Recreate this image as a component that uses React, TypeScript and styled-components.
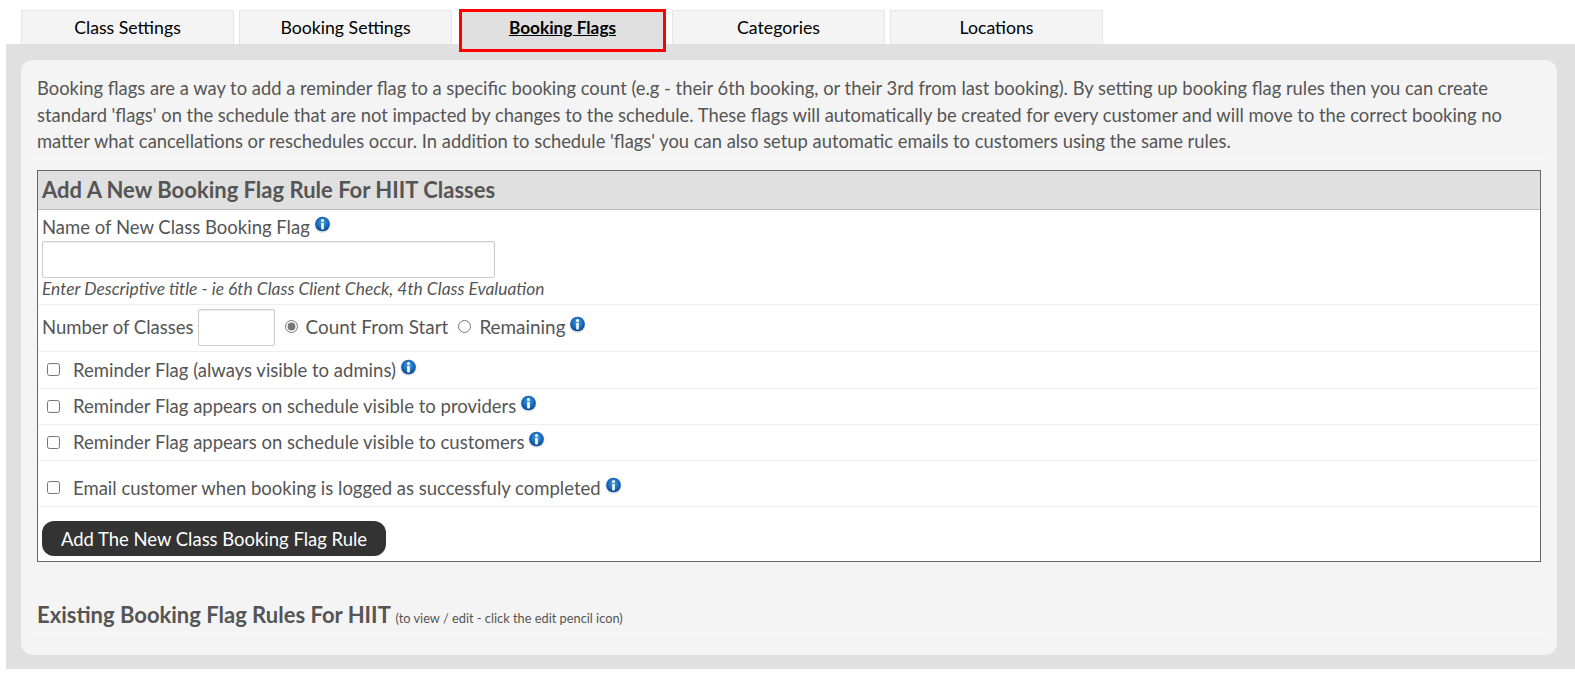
import React from 'react';
import styled, { createGlobalStyle } from 'styled-components';

const GlobalStyle = createGlobalStyle`
  html, body {
    margin: 0;
    padding: 0;
    background: #fff;
  }
  body {
    font-family: Lato, "Open Sans", sans-serif;
    font-size: 18.5px;
    color: #555;
  }
`;

const TabBar = styled.div`
  display: flex;
  align-items: flex-start;
  height: 34px;
  padding: 10px 0 0 21px;
`;

const Tab = styled.div<{ $active?: boolean; $gap?: number }>`
  position: relative;
  box-sizing: border-box;
  width: ${(p) => (p.$active ? '207px' : '213px')};
  height: ${(p) => (p.$active ? '43px' : '34px')};
  margin-top: ${(p) => (p.$active ? '-1px' : '0')};
  margin-right: ${(p) => p.$gap ?? 5}px;
  padding-top: ${(p) => (p.$active ? '5px' : '6px')};
  text-align: center;
  font-size: ${(p) => (p.$active ? '17.3px' : '17.7px')};
  line-height: 21px;
  color: #000;
  background: ${(p) => (p.$active ? '#e0e0e0' : '#f4f4f4')};
  border: ${(p) => (p.$active ? '3px solid #f00' : '1px solid #e6e6e6')};
  border-bottom: ${(p) => (p.$active ? '3px solid #f00' : 'none')};
  text-decoration: ${(p) => (p.$active ? 'underline' : 'none')};
  font-weight: ${(p) => (p.$active ? 700 : 400)};
`;

const Panel = styled.div`
  margin-left: 6px;
  padding: 16px 18px 14px 15px;
  background: #e0e0e0;
`;

const Card = styled.div`
  box-sizing: border-box;
  height: 595px;
  padding: 15px 11px 0;
  background: #f4f4f4;
  border-radius: 12px;
`;

const Intro = styled.p`
  margin: 0;
  padding: 0 5px 3px;
  font-size: 18.38px;
  line-height: 26.5px;
  border-bottom: 1px solid #fbfbfb;
`;

const RuleBox = styled.div`
  margin: 11px 5px 0 5px;
  background: #fff;
  border: 1px solid #666;
`;

const RuleTitle = styled.h2`
  margin: 0;
  height: 38px;
  padding-left: 4px;
  font-size: 22px;
  font-weight: 700;
  line-height: 37px;
  background: #e0e0e0;
  border-bottom: 1px solid #bbb;
`;

const NameRow = styled.div`
  box-sizing: border-box;
  height: 95px;
  padding: 4px 4px 0;
  border-bottom: 1px solid #eee;
`;

const Label = styled.div`
  display: flex;
  align-items: center;
  height: 27px;
  line-height: 27px;
`;

const TextInput = styled.input<{ $width: number; $height: number }>`
  display: block;
  box-sizing: border-box;
  width: ${(p) => p.$width}px;
  height: ${(p) => p.$height}px;
  margin: 0;
  background: #fff;
  border: 1px solid #ccc;
  border-radius: 2px;
  box-shadow: inset 0 1px 2px rgba(0, 0, 0, 0.07);
`;

const Hint = styled.div`
  font-size: 17.4px;
  font-style: italic;
  line-height: 22px;
`;

const CountRow = styled.div`
  display: flex;
  align-items: center;
  box-sizing: border-box;
  height: 47px;
  padding: 0 4px 2px;
  border-bottom: 1px solid #eee;
`;

const CountLabel = styled.span`
  margin-right: 4px;
`;

const NumberField = styled(TextInput)`
  margin-top: 2px;
`;

const Radio = styled.input`
  width: 13px;
  height: 13px;
  margin: 0 8px 0 10px;
  accent-color: #777;
`;

const RadioText = styled.span`
  font-size: 18.9px;
`;

const CheckRow = styled.label<{ $height: number; $spaced?: boolean }>`
  display: flex;
  align-items: center;
  box-sizing: border-box;
  height: ${(p) => p.$height}px;
  padding-left: 9px;
  border-bottom: 1px solid #eee;
  margin-bottom: ${(p) => (p.$spaced ? '9px' : '0')};
`;

const Check = styled.input`
  width: 13px;
  height: 13px;
  margin: 0 13px 0 0;
`;

const InfoMark = styled.svg`
  flex: none;
  margin: -5px 0 0 4px;
`;

const ButtonRow = styled.div`
  box-sizing: border-box;
  height: 45px;
  padding: 5px 4px 0;
`;

const AddButton = styled.button`
  display: block;
  width: 344px;
  height: 35px;
  padding: 0;
  font-family: inherit;
  font-size: 18.45px;
  line-height: 37px;
  color: #fff;
  background: #333;
  border: none;
  border-radius: 12px;
`;

const ExistingTitle = styled.h3`
  box-sizing: border-box;
  margin: 37px 0 0;
  padding: 0 5px;
  height: 35px;
  font-size: 22px;
  font-weight: 700;
  line-height: 31px;
  border-bottom: 1px solid #fbfbfb;
`;

const Small = styled.small`
  font-size: 12.8px;
  font-weight: 400;
`;

const Info = () => (
  <InfoMark width="17" height="17" viewBox="0 0 17 17" aria-hidden="true">
    <defs>
      <radialGradient id="infoFill" cx="50%" cy="40%" r="60%">
        <stop offset="0%" stopColor="#4aa3e6" />
        <stop offset="70%" stopColor="#1463b4" />
        <stop offset="100%" stopColor="#0a3f86" />
      </radialGradient>
    </defs>
    <circle cx="8.5" cy="8.8" r="8" fill="#d5dbe2" />
    <circle cx="8.5" cy="8" r="7.3" fill="url(#infoFill)" />
    <circle cx="8.5" cy="4.6" r="1.5" fill="#fff" />
    <rect x="7.2" y="7" width="2.6" height="6.4" rx="0.6" fill="#fff" />
  </InfoMark>
);

const tabs = ['Class Settings', 'Booking Settings', 'Booking Flags', 'Categories', 'Locations'];

const App: React.FC = () => {
  return (
    <>
      <GlobalStyle />
      <TabBar>
        {tabs.map((t, i) => (
          <Tab key={t} $active={i === 2} $gap={i === 1 ? 7 : i === 2 ? 6 : 5}>
            {t}
          </Tab>
        ))}
      </TabBar>
      <Panel>
        <Card>
          <Intro>
            Booking flags are a way to add a reminder flag to a specific booking count (e.g - their 6th booking, or
            their 3rd from last booking). By setting up booking flag rules then you can create standard 'flags' on the
            schedule that are not impacted by changes to the schedule. These flags will automatically be created for
            every customer and will move to the correct booking no matter what cancellations or reschedules occur. In
            addition to schedule 'flags' you can also setup automatic emails to customers using the same rules.
          </Intro>
          <RuleBox>
            <RuleTitle>Add A New Booking Flag Rule For HIIT Classes</RuleTitle>
            <NameRow>
              <Label>
                Name of New Class Booking Flag
                <Info />
              </Label>
              <TextInput $width={453} $height={37} />
              <Hint>Enter Descriptive title - ie 6th Class Client Check, 4th Class Evaluation</Hint>
            </NameRow>
            <CountRow>
              <CountLabel>Number of Classes</CountLabel>
              <NumberField $width={77} $height={37} />
              <Radio type="radio" name="count" defaultChecked />
              <RadioText>Count From Start</RadioText>
              <Radio type="radio" name="count" />
              <RadioText>Remaining</RadioText>
              <Info />
            </CountRow>
            <CheckRow $height={37}>
              <Check type="checkbox" />
              Reminder Flag (always visible to admins)
              <Info />
            </CheckRow>
            <CheckRow $height={36}>
              <Check type="checkbox" />
              Reminder Flag appears on schedule visible to providers
              <Info />
            </CheckRow>
            <CheckRow $height={36} $spaced>
              <Check type="checkbox" />
              Reminder Flag appears on schedule visible to customers
              <Info />
            </CheckRow>
            <CheckRow $height={37} $spaced>
              <Check type="checkbox" />
              Email customer when booking is logged as successfuly completed
              <Info />
            </CheckRow>
            <ButtonRow>
              <AddButton type="button">Add The New Class Booking Flag Rule</AddButton>
            </ButtonRow>
          </RuleBox>
          <ExistingTitle>
            Existing Booking Flag Rules For HIIT <Small>(to view / edit - click the edit pencil icon)</Small>
          </ExistingTitle>
        </Card>
      </Panel>
    </>
  );
};

export default App;
